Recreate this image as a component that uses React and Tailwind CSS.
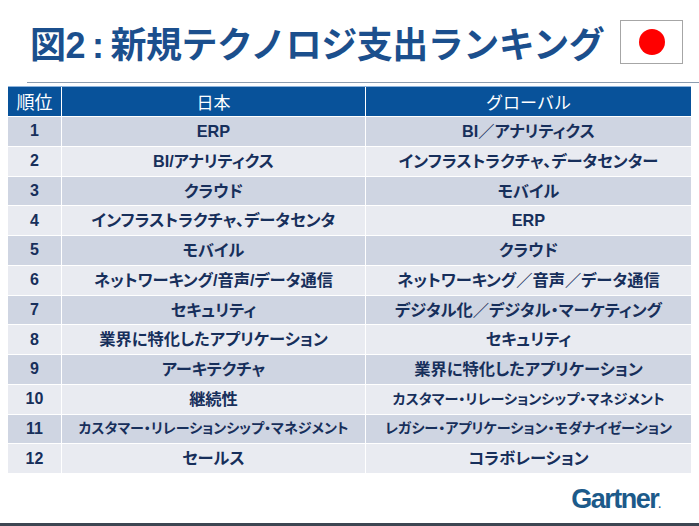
import React from "react";

const rows = [
  ["1", "ERP", "BI／アナリティクス"],
  ["2", "BI/アナリティクス", "インフラストラクチャ、データセンター"],
  ["3", "クラウド", "モバイル"],
  ["4", "インフラストラクチャ、データセンタ", "ERP"],
  ["5", "モバイル", "クラウド"],
  ["6", "ネットワーキング/音声/データ通信", "ネットワーキング／音声／データ通信"],
  ["7", "セキュリティ", "デジタル化／デジタル・マーケティング"],
  ["8", "業界に特化したアプリケーション", "セキュリティ"],
  ["9", "アーキテクチャ", "業界に特化したアプリケーション"],
  ["10", "継続性", "カスタマー・リレーションシップ・マネジメント"],
  ["11", "カスタマー・リレーションシップ・マネジメント", "レガシー・アプリケーション・モダナイゼーション"],
  ["12", "セールス", "コラボレーション"],
];

function Cell({ children, size, className }) {
  return (
    <div
      className={
        "flex items-center justify-center font-bold text-[#172f5b] whitespace-nowrap [font-feature-settings:'palt'] " +
        size +
        " " +
        className
      }
    >
      {children}
    </div>
  );
}

export default function App() {
  return (
    <div className="w-[699px] h-[526px] bg-white flex flex-col overflow-hidden font-['Liberation_Sans','Noto_Sans_CJK_JP',sans-serif]">
      <div className="h-[82px] flex items-start">
        <h1 className="pl-[30px] pt-[24px] text-[36px] leading-[44px] font-bold text-[#1b4f8d] whitespace-nowrap tracking-[-0.5px]">
          図2<span className="inline-block mx-[7px]">:</span>新規テクノロジ支出ランキング
        </h1>
        <div className="ml-auto mr-[16px] mt-[20px] w-[63px] h-[44px] border border-[#a6a6a6] bg-white flex items-center justify-center">
          <div className="w-[26px] h-[26px] rounded-full bg-[#ff0000]" />
        </div>
      </div>
      <div className="ml-[27px] h-px bg-[#8d9db0]" />
      <div className="mt-[3px] ml-[8px] w-[683px] flex flex-col gap-px">
        <div className="h-[30px] grid grid-cols-[53px_303px_325px] gap-px bg-white border-t border-[#8fb4dc]">
          <div className="bg-[#08529a] flex items-center justify-center text-white text-[18px] font-['Noto_Sans_CJK_JP',sans-serif]">順位</div>
          <div className="bg-[#08529a] flex items-center justify-center text-white text-[17px] font-['Noto_Sans_CJK_JP',sans-serif]">日本</div>
          <div className="bg-[#08529a] flex items-center justify-center text-white text-[17px] font-['Noto_Sans_CJK_JP',sans-serif]">グローバル</div>
        </div>
        {rows.map((r, i) => {
          const bg = i % 2 === 0 ? "bg-[#cfd5e2]" : "bg-[#e9ebf1]";
          const leftSize = r[0] === "11" ? "text-[14px]" : "text-[16.25px]";
          const rightSize = r[0] === "10" || r[0] === "11" ? "text-[14.1px]" : "text-[16.25px]";
          return (
            <div key={r[0]} className="h-[28.75px] grid grid-cols-[53px_303px_325px] gap-px">
              <Cell className={bg} size="text-[16px]">{r[0]}</Cell>
              <Cell className={bg} size={leftSize}>{r[1]}</Cell>
              <Cell className={bg} size={rightSize}>{r[2]}</Cell>
            </div>
          );
        })}
      </div>
      <div className="flex-1 flex items-start justify-end pr-[38px] pt-[11px]">
        <div className="text-[27px] leading-[30px] font-bold text-[#1c5a8a] tracking-[-1.5px]">
          Gartner<span className="text-[10px] tracking-normal">.</span>
        </div>
      </div>
      <div className="h-[3px] bg-[#3d4652]" />
    </div>
  );
}
